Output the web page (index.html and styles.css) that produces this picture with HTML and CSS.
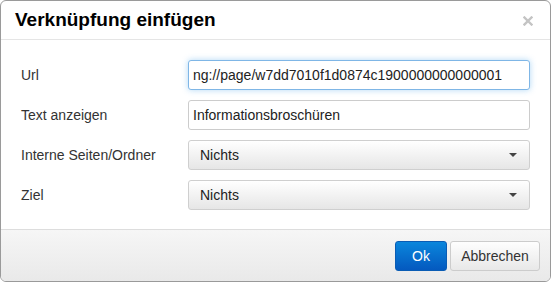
FILE: index.html
```html
<!DOCTYPE html>
<html>
<head>
<meta charset="utf-8">
<link rel="stylesheet" href="styles.css">
</head>
<body>
<div class="dialog">
  <div class="header">
    <h1 class="title">Verknüpfung einfügen</h1>
    <svg class="close" width="10" height="10" viewBox="0 0 10 10"><path d="M1.5 1.5 L8.5 8.5 M8.5 1.5 L1.5 8.5" stroke="#c4c4c4" stroke-width="2.4" stroke-linecap="square"/></svg>
  </div>
  <div class="body">
    <div class="row">
      <label class="label">Url</label>
      <div class="field input focus">ng://page/w7dd7010f1d0874c1900000000000001</div>
    </div>
    <div class="row">
      <label class="label">Text anzeigen</label>
      <div class="field input">Informationsbroschüren</div>
    </div>
    <div class="row">
      <label class="label">Interne Seiten/Ordner</label>
      <div class="field select"><span>Nichts</span><span class="caret"></span></div>
    </div>
    <div class="row">
      <label class="label">Ziel</label>
      <div class="field select"><span>Nichts</span><span class="caret"></span></div>
    </div>
  </div>
  <div class="footer">
    <button class="btn primary">Ok</button>
    <button class="btn">Abbrechen</button>
  </div>
</div>
</body>
</html>
```
FILE: styles.css
```css
* { box-sizing: border-box; }
html, body { margin: 0; padding: 0; background: #fff; }
body { font-family: "Liberation Sans", Arial, sans-serif; font-size: 14px; color: #333; }
.dialog {
  width: 551px; height: 282px;
  border: 1px solid #9a9a9a;
  border-radius: 6px;
  overflow: hidden;
  display: flex; flex-direction: column;
  background: #fff;
}
.header {
  height: 39px;
  border-bottom: 1px solid #e5e5e5;
  display: flex; align-items: center; justify-content: space-between;
  padding: 0 17px 0 14px;
}
.title { margin: 0; font-size: 19px; font-weight: bold; color: #000; line-height: 24px; }
.close { display: block; margin-top: 1px; }
.body { flex: 1; padding: 20px 20px 0 20px; display: flex; flex-direction: column; gap: 10px; }
.row { display: flex; align-items: center; height: 30px; }
.label { width: 167px; color: #333; }
.field { width: 342px; height: 30px; border: 1px solid #ccc; border-radius: 3px; display: flex; align-items: center; }
.input { padding: 0 4px; color: #222; background: #fff; white-space: nowrap; overflow: hidden; }
.input.focus { border-color: #7fb6e6; box-shadow: 0 0 6px rgba(82,168,236,0.45); }
.select {
  padding: 0 11px; justify-content: space-between; color: #222;
  background: linear-gradient(#ffffff, #e6e6e6);
  border-color: #cfcfcf;
  box-shadow: inset 0 1px 0 rgba(255,255,255,0.4);
}
.caret { width: 0; height: 0; border-left: 4px solid transparent; border-right: 4px solid transparent; border-top: 4px solid #444; margin-right: 1px; }
.footer {
  height: 52px;
  border-top: 1px solid #ddd;
  background: linear-gradient(#f6f6f6, #e9e9e9);
  display: flex; justify-content: flex-end; align-items: center; gap: 3px;
  padding: 0 10px 0 0;
}
.btn {
  font-family: "Liberation Sans", Arial, sans-serif; font-size: 14px;
  height: 30px; width: 90px; padding: 0; border: 1px solid #ccc; border-radius: 3px;
  background: linear-gradient(#fefefe, #e8e8e8); color: #333; margin: 0;
}
.btn.primary {
  width: 52px;
  background: linear-gradient(#0a86dc, #0459bf);
  border-color: #0a5cb4; color: #fff;
}
```
